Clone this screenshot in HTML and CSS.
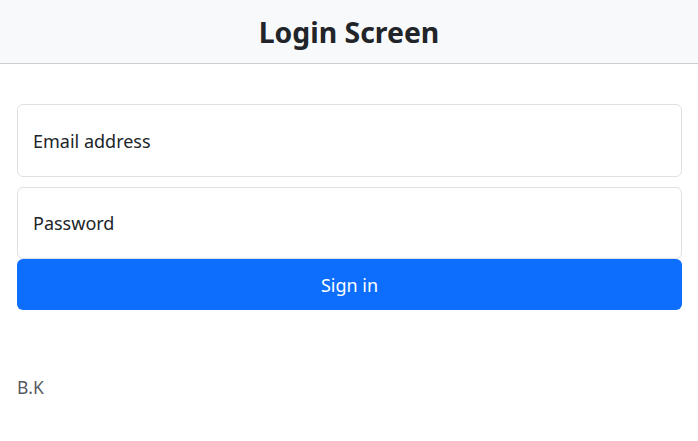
FILE: index.html
```html
<!DOCTYPE html>
<html lang="en">
<head>
<meta charset="utf-8">
<title>Login Screen</title>
<link rel="stylesheet" href="styles.css">
</head>
<body>
<header class="topbar">
  <h1 class="title">Login Screen</h1>
</header>
<main class="content">
  <form class="login">
    <div class="field"><span class="label">Email address</span></div>
    <div class="field field-last"><span class="label">Password</span></div>
    <button type="button" class="btn">Sign in</button>
  </form>
  <p class="footer">B.K</p>
</main>
</body>
</html>
```
FILE: styles.css
```css
* { box-sizing: border-box; }
html, body { margin: 0; padding: 0; background: #fff; }
body {
  font-family: "Noto Sans", "Open Sans", sans-serif;
  color: #212529;
}
.topbar {
  height: 64px;
  background: #f8f9fa;
  border-bottom: 1px solid #cfcfcf;
  display: flex;
  align-items: center;
  justify-content: center;
}
.title {
  margin: 0;
  font-size: 28.4px;
  font-weight: 700;
  color: #212529;
}
.content {
  padding: 40px 16px 0 17px;
}
.login {
  display: flex;
  flex-direction: column;
}
.field {
  height: 73px;
  border: 1px solid #dee2e6;
  border-radius: 6px;
  display: flex;
  align-items: center;
  padding: 0 15px;
  margin-bottom: 10px;
}
.field-last { margin-bottom: 0; height: 72px; }
.label {
  font-size: 18px;
  color: #212529;
}
.btn {
  height: 51px;
  padding-top: 2px;
  border: 0;
  border-radius: 6px;
  background: #0d6efd;
  color: #fff;
  font-family: inherit;
  font-size: 18px;
}
.footer {
  margin: 65px 0 0;
  font-size: 17.5px;
  color: #555b61;
}
```
